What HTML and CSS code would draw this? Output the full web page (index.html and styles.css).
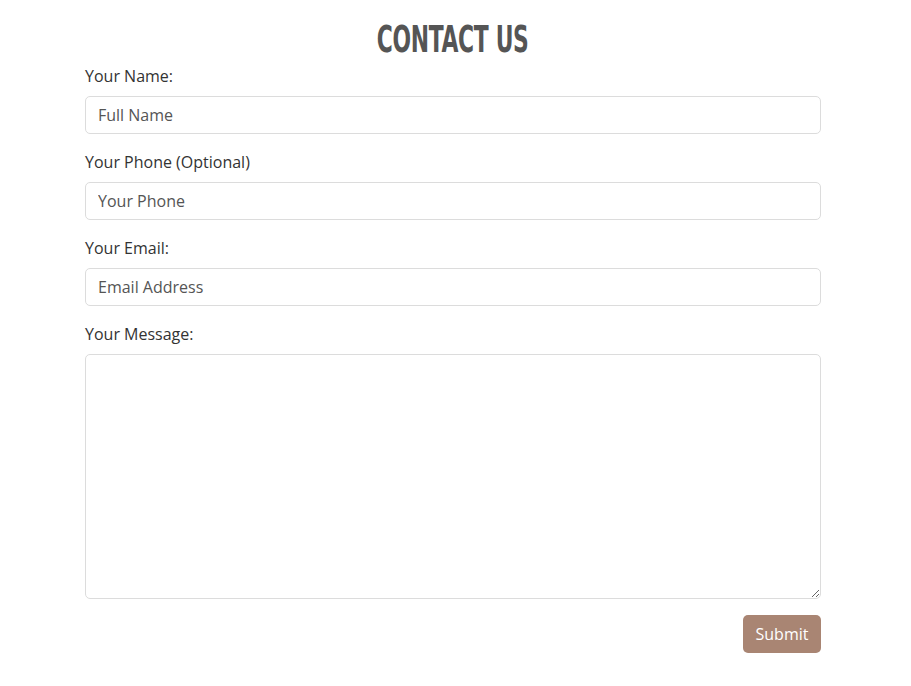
FILE: index.html
```html
<!DOCTYPE html>
<html lang="en">
<head>
<meta charset="utf-8">
<title>Contact Us</title>
<link rel="stylesheet" href="styles.css">
</head>
<body>
<main class="contact">
  <h1 class="title"><span class="title-text">CONTACT US</span></h1>
  <form class="form">
    <label class="label" for="name">Your Name:</label>
    <input class="field" id="name" type="text" placeholder="Full Name">
    <label class="label" for="phone">Your Phone (Optional)</label>
    <input class="field" id="phone" type="text" placeholder="Your Phone">
    <label class="label" for="email">Your Email:</label>
    <input class="field" id="email" type="email" placeholder="Email Address">
    <label class="label" for="msg">Your Message:</label>
    <textarea class="field area" id="msg"></textarea>
    <div class="actions">
      <button class="submit" type="button">Submit</button>
    </div>
  </form>
</main>
</body>
</html>
```
FILE: styles.css
```css
* { box-sizing: border-box; }
html, body { margin: 0; padding: 0; background: #fff; }
body {
  font-family: "Open Sans", "Lato", sans-serif;
  color: #333;
  font-size: 16px;
}
.contact {
  width: 736px;
  margin: 0 0 0 85px;
  padding-top: 18px;
}
.title {
  margin: 0 0 4px;
  text-align: center;
  font-family: "DejaVu Sans Condensed", "DejaVu Sans", sans-serif;
  font-weight: 700;
  font-size: 38px;
  line-height: 42px;
  color: #555;
}
.title-text {
  display: inline-block;
  transform: scaleX(0.64);
  letter-spacing: -0.5px;
}
.form { display: flex; flex-direction: column; }
.label {
  display: block;
  line-height: 24px;
  margin-bottom: 8px;
  color: #333;
}
.field {
  display: block;
  width: 100%;
  height: 38px;
  padding: 6px 12px;
  margin: 0 0 16px;
  font-family: inherit;
  font-size: 16px;
  color: #333;
  border: 1px solid #dcdcdc;
  border-radius: 5px;
  background: #fff;
  outline: none;
}
.field::placeholder { color: #555; }
.area { height: 245px; resize: vertical; }
.actions { display: flex; justify-content: flex-end; }
.submit {
  width: 78px;
  height: 38px;
  border: none;
  border-radius: 5px;
  background: #a98573;
  color: #fff;
  font-family: inherit;
  font-size: 16px;
  cursor: pointer;
}
```
